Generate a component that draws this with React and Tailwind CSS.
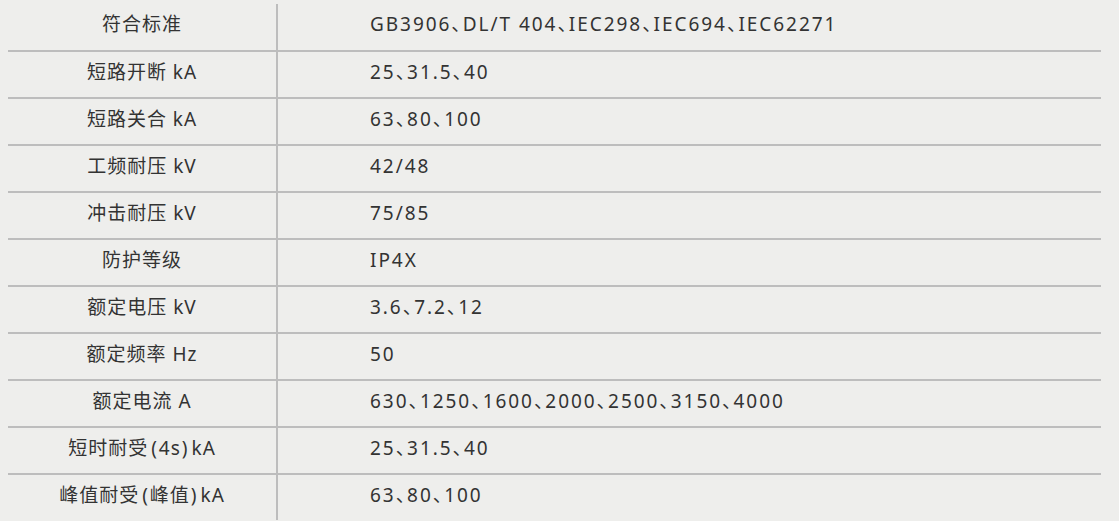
const L = () => <span className="ml-[3px] mr-[1px]">(</span>;
const R = () => <span className="ml-[1px] mr-[3px]">)</span>;

const rows = [
  ['符合标准', 'GB3906、DL/T 404、IEC298、IEC694、IEC62271'],
  ['短路开断 kA', '25、31.5、40'],
  ['短路关合 kA', '63、80、100'],
  ['工频耐压 kV', '42/48'],
  ['冲击耐压 kV', '75/85'],
  ['防护等级', 'IP4X'],
  ['额定电压 kV', '3.6、7.2、12'],
  ['额定频率 Hz', '50'],
  ['额定电流 A', '630、1250、1600、2000、2500、3150、4000'],
  [<>短时耐受<L />4s<R />kA</>, '25、31.5、40'],
  [<>峰值耐受<L />峰值<R />kA</>, '63、80、100'],
];

export default function App() {
  return (
    <div
      className="w-[1119px] h-[521px] bg-[#eeeeec] text-[#333333] pl-[8px] pt-[4px] overflow-hidden"
      style={{ fontFamily: '"Noto Sans", "Noto Sans CJK SC", sans-serif' }}
    >
      <div className="w-[1093px]">
        {rows.map(([label, value], i) => (
          <div
            key={i}
            className={
              'grid grid-cols-[268px_1fr] ' +
              (i === 0 ? 'h-[46px]' : 'h-[47px] border-t-2 border-[#bdbdbd]')
            }
          >
            <div className="flex items-center justify-center pb-[5px] text-[19px] tracking-[1px]">
              {label}
            </div>
            <div className="flex items-center border-l-2 border-[#bdbdbd] pl-[92px] pb-[5px] text-[19px] tracking-[1.95px] [font-feature-settings:'halt']">
              {value}
            </div>
          </div>
        ))}
      </div>
    </div>
  );
}
